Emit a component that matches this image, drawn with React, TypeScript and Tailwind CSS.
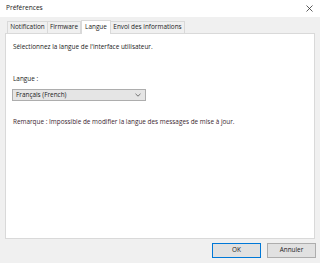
import React from "react";

export default function App() {
  return (
    <div
      className="w-[320px] h-[263px] bg-[#f0f0f0] flex flex-col text-[6.4px] text-[#1a1a1a] overflow-hidden"
      style={{ fontFamily: '"Open Sans", "Noto Sans", sans-serif' }}
    >
      <div className="h-[17px] bg-white flex items-center justify-between pl-[6px] pr-[5px]">
        <span className="text-[6.6px] leading-none text-[#1a1a1a]">Préférences</span>
        <svg width="7" height="7" viewBox="0 0 7 7" className="mr-[2px]">
          <path d="M0.5 0.5 L6.5 6.5 M6.5 0.5 L0.5 6.5" stroke="#333" strokeWidth="0.8" />
        </svg>
      </div>
      <div className="flex flex-col px-[5px] pt-[3px]">
        <div className="flex items-end pl-[2px] h-[13px]">
          <div className="w-[41px] h-[12px] border border-b-0 border-[#d9d9d9] bg-[#f0f0f0] flex items-center justify-center leading-none">Notification</div>
          <div className="w-[33px] h-[12px] border border-b-0 border-l-0 border-[#d9d9d9] bg-[#f0f0f0] flex items-center justify-center leading-none">Firmware</div>
          <div className="w-[30px] h-[14px] border border-b-0 border-[#d9d9d9] bg-white flex items-center justify-center leading-none -mb-px relative z-10">Langue</div>
          <div className="w-[74px] h-[12px] border border-b-0 border-l-0 border-[#d9d9d9] bg-[#f0f0f0] flex items-center justify-center leading-none">Envoi des informations</div>
        </div>
        <div className="h-[206px] bg-white border border-[#d9d9d9] flex flex-col pl-[7px]">
          <div className="mt-[8px] leading-[9px]">Sélectionnez la langue de l'interface utilisateur.</div>
          <div className="mt-[23px] leading-[9px]">Langue :</div>
          <div className="mt-[6px] w-[134px] h-[12px] bg-[#e5e5e5] border border-[#adadad] flex items-center justify-between pl-[3px] pr-[4px] -ml-[1px]">
            <span className="leading-none">Français (French)</span>
            <svg width="6" height="4" viewBox="0 0 6 4">
              <path d="M0.5 0.8 L3 3.2 L5.5 0.8" stroke="#555" strokeWidth="0.8" fill="none" />
            </svg>
          </div>
          <div className="mt-[16px] leading-[9px] text-[#3a1e2e]">Remarque : Impossible de modifier la langue des messages de mise à jour.</div>
        </div>
      </div>
      <div className="flex justify-end gap-[6px] pr-[4px] mt-[4px]">
        <button className="w-[49px] h-[15px] bg-[#e1e1e1] border border-[#0078d7] text-[6.4px] leading-none flex items-center justify-center">OK</button>
        <button className="w-[49px] h-[15px] bg-[#e1e1e1] border border-[#adadad] text-[6.4px] leading-none flex items-center justify-center">Annuler</button>
      </div>
    </div>
  );
}
